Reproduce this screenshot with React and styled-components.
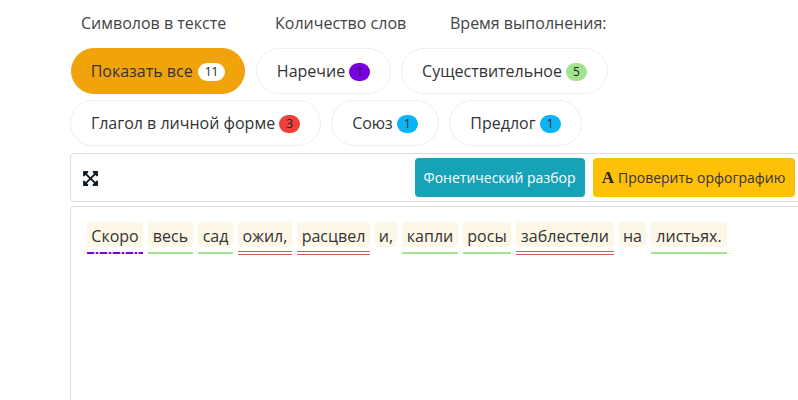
import React from "react";
import styled, { createGlobalStyle } from "styled-components";
import { FaExpandArrowsAlt } from "react-icons/fa";

const Global = createGlobalStyle`
  html, body { margin: 0; padding: 0; background: #fff; overflow: hidden; }
  body { font-family: "Open Sans", "Liberation Sans", sans-serif; color: #333; }
`;

const Page = styled.div`
  width: 798px;
  height: 400px;
  overflow: hidden;
  padding-left: 70px;
  box-sizing: border-box;
`;

const Stats = styled.div`
  display: flex;
  height: 48px;
  padding-left: 11px;
  align-items: center;
  font-size: 16px;
  color: #444;
`;

const Stat = styled.span`
  width: ${(p) => p.$w}px;
  white-space: nowrap;
  padding-bottom: 2px;
`;

const PillRow = styled.div`
  display: flex;
  gap: 10px;
  height: 46px;
  margin-bottom: 6px;
`;

const Pill = styled.div`
  box-sizing: border-box;
  height: 46px;
  width: ${(p) => p.$w}px;
  margin-left: ${(p) => p.$ml || 0}px;
  border-radius: 23px;
  border: 1px solid ${(p) => (p.$active ? "#f0a30a" : "#eeeeee")};
  background: ${(p) => (p.$active ? "#f0a30a" : "#fff")};
  color: #333;
  font-size: 16px;
  display: flex;
  align-items: center;
  justify-content: center;
  gap: ${(p) => (p.$active ? 5 : 4)}px;
  white-space: nowrap;
  padding-bottom: 1px;
`;

const Badge = styled.span`
  box-sizing: border-box;
  min-width: 21px;
  height: 18px;
  padding: 0 7px;
  border-radius: 9px;
  background: ${(p) => p.$bg};
  color: #222;
  font-size: 12px;
  line-height: 18px;
  text-align: center;
  margin-top: 3px;
`;

const Toolbar = styled.div`
  box-sizing: border-box;
  width: 740px;
  height: 49px;
  margin-top: 7px;
  border: 1px solid #dddddd;
  border-radius: 4px;
  display: flex;
  align-items: center;
  padding: 0 12px 0 12px;
  flex-shrink: 0;
`;

const ExpandIcon = styled(FaExpandArrowsAlt)`
  width: 17px;
  height: 17px;
  display: block;
  margin: 1px 0 0 -1px;
  color: #0a1a26;
`;

const Actions = styled.div`
  margin-left: auto;
  margin-right: 2px;
  display: flex;
  gap: 8px;
`;

const Action = styled.div`
  box-sizing: border-box;
  height: 39px;
  width: ${(p) => p.$w}px;
  border-radius: 4px;
  background: ${(p) => p.$bg};
  color: ${(p) => p.$fg};
  font-size: 14px;
  display: flex;
  align-items: center;
  justify-content: center;
  gap: 4px;
  white-space: nowrap;
  padding-right: 1px;
`;

const Glyph = styled.span`
  font-family: "Liberation Serif", serif;
  font-weight: 700;
  font-size: 17px;
  color: #222;
`;

const Panel = styled.div`
  box-sizing: border-box;
  width: 760px;
  height: 220px;
  margin-top: 4px;
  border: 1px solid #dddddd;
  border-right: none;
  border-radius: 4px 0 0 0;
  padding: 15px 0 0 16px;
  display: flex;
  align-items: flex-start;
  gap: 5px;
`;

const WordBox = styled.div`
  position: relative;
  height: 33px;
  width: ${(p) => p.$w}px;
  flex-shrink: 0;
`;

const WordText = styled.span`
  box-sizing: border-box;
  display: flex;
  align-items: center;
  justify-content: center;
  height: 25px;
  padding-top: 2px;
  border-radius: 3px;
  background: #fdf7e8;
  color: #333;
  font-size: 16px;
  line-height: 22px;
  white-space: nowrap;
`;

const Under = styled.i`
  position: absolute;
  box-sizing: border-box;
  left: 0;
  right: 0;
  display: block;
  ${(p) => p.$kind === "noun" && "height: 2px; top: 30px; background: #a0e58e;"}
  ${(p) =>
    p.$kind === "verb" &&
    "height: 4px; top: 29px; border-top: 1px solid #c7605a; border-bottom: 1px solid #c7605a;"}
  ${(p) =>
    p.$kind === "adv" &&
    "height: 2px; top: 30px; background-image: repeating-linear-gradient(90deg, #7b00e0 0 7px, #d9b8f5 7px 9px, #7b00e0 9px 11px, #d9b8f5 11px 13px);"}
`;

const words = [
  ["Скоро", 56, "adv"],
  ["весь", 45, "noun"],
  ["сад", 35, "noun"],
  ["ожил,", 54, "verb"],
  ["расцвел", 73, "verb"],
  ["и,", 22, null],
  ["капли", 56, "noun"],
  ["росы", 48, "noun"],
  ["заблестели", 98, "verb"],
  ["на", 27, null],
  ["листьях.", 76, "noun"],
];

export default function App() {
  return (
    <Page>
      <Global />
      <Stats>
        <Stat $w={194}>Символов в тексте</Stat>
        <Stat $w={175}>Количество слов</Stat>
        <Stat $w={170}>Время выполнения:</Stat>
      </Stats>
      <PillRow>
        <Pill $active $w={174} $ml={1}>Показать все <Badge $bg="#fff">11</Badge></Pill>
        <Pill $w={135} $ml={1}>Наречие <Badge $bg="#7b00e0">1</Badge></Pill>
        <Pill $w={207}>Существительное <Badge $bg="#a3e28f">5</Badge></Pill>
      </PillRow>
      <PillRow>
        <Pill $w={251}>Глагол в личной форме <Badge $bg="#f0403a">3</Badge></Pill>
        <Pill $w={108}>Союз <Badge $bg="#0db4f3">1</Badge></Pill>
        <Pill $w={133}>Предлог <Badge $bg="#0db4f3">1</Badge></Pill>
      </PillRow>
      <Toolbar>
        <ExpandIcon />
        <Actions>
          <Action $w={170} $bg="#17a2b8" $fg="#fff">Фонетический разбор</Action>
          <Action $w={202} $bg="#ffc107" $fg="#333"><Glyph>A</Glyph>Проверить орфографию</Action>
        </Actions>
      </Toolbar>
      <Panel>
        {words.map(([t, w, k]) => (
          <WordBox key={t} $w={w}>
            <WordText>{t}</WordText>
            {k && <Under $kind={k} />}
          </WordBox>
        ))}
      </Panel>
    </Page>
  );
}
